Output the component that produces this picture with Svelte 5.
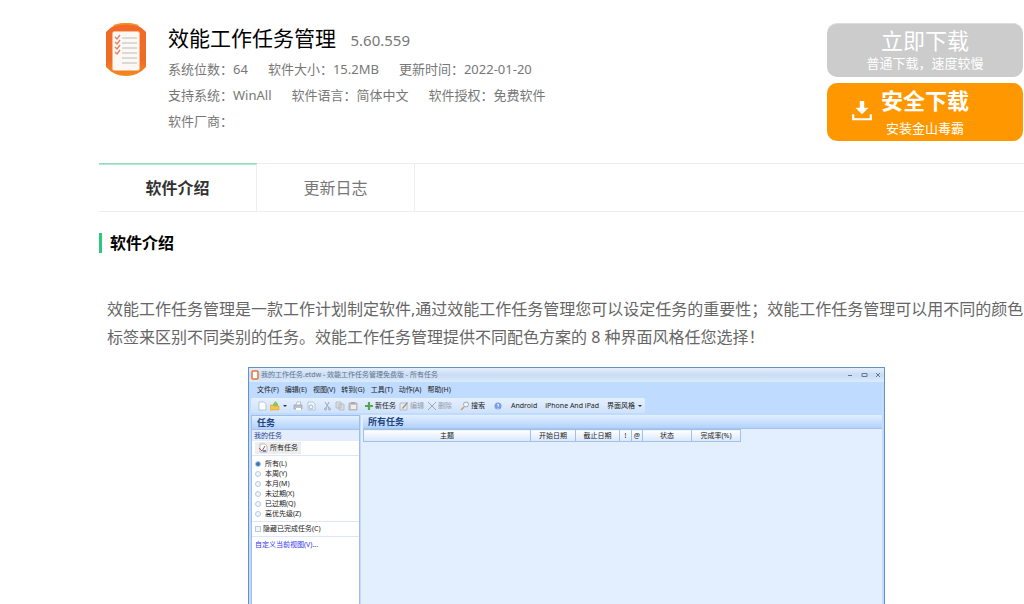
<script lang="ts">
    const info = [
        [["系统位数", "64"], ["软件大小", "15.2MB"], ["更新时间", "2022-01-20"]],
        [["支持系统", "WinAll"], ["软件语言", "简体中文"], ["软件授权", "免费软件"]],
        [["软件厂商", ""]]
    ]

    const tabs = ["软件介绍", "更新日志"]
    let activeTab = $state(0)

    const menus = ["文件(F)", "编辑(E)", "视图(V)", "转到(G)", "工具(T)", "动作(A)", "帮助(H)"]
    const filters = ["所有(L)", "本周(Y)", "本月(M)", "未过期(X)", "已过期(Q)", "高优先级(Z)"]
    let filter = $state("所有(L)")

    const columns = [
        { name: "主题", width: 167 },
        { name: "开始日期", width: 45 },
        { name: "截止日期", width: 44 },
        { name: "!", width: 12 },
        { name: "@", width: 11 },
        { name: "状态", width: 49 },
        { name: "完成率(%)", width: 49 }
    ]
</script>

<div class="page">
    <header>
        <svg class="logo" viewBox="0 0 42 54">
            <defs>
                <linearGradient id="logo-bg" x1="0" y1="0" x2="0" y2="1">
                    <stop offset="0" stop-color="#f2692a" />
                    <stop offset="0.7" stop-color="#ee6c25" />
                    <stop offset="1" stop-color="#f28a1f" />
                </linearGradient>
            </defs>
            <path d="M1 9Q9 0 21 0Q33 0 41 9V44Q33 53 21 53Q9 53 1 44Z" fill="url(#logo-bg)" />
            <path d="M9 2.500Q14 .8 21 .8Q28 .8 33 2.500" fill="none" stroke="#f7941e" stroke-width="1.5" />
            <rect x="7.5" y="8.500" width="27" height="39" rx="2" fill="#fdf8f4" stroke="#f9b98c" />
            <path d="M17 15H32M17 20H32M17 25H32M17 30H32M17 35H32M17 40H32" stroke="#cfcfd2" stroke-width="1.3" />
            <path d="M10 14l2 2 3-4M10 19l2 2 3-4M10 24l2 2 3-4M10 29l2 2 3-4" fill="none" stroke="#e58065" stroke-width="1.4" />
        </svg>
        <div class="summary">
            <h1>效能工作任务管理 <span>5.60.559</span></h1>
            {#each info as row}
                <div class="info-row">
                    {#each row as [label, value]}
                        <span>{label}：{value}</span>
                    {/each}
                </div>
            {/each}
        </div>
        <div class="downloads">
            <button class="download plain">
                <strong>立即下载</strong>
                <small>普通下载，速度较慢</small>
            </button>
            <button class="download safe">
                <svg viewBox="0 0 20 20">
                    <path d="M8 1h4v6h4l-6 6-6-6h4z" fill="#fff" />
                    <path d="M2 13v4.500h16V13" fill="none" stroke="#fff" stroke-width="2" />
                </svg>
                <strong>安全下载</strong>
                <small>安装金山毒霸</small>
            </button>
        </div>
    </header>

    <nav>
        {#each tabs as tab, i}
            <button class:active={activeTab == i} onclick={() => activeTab = i}>{tab}</button>
        {/each}
    </nav>

    <h2>软件介绍</h2>
    <p class="intro">效能工作任务管理是一款工作计划制定软件,通过效能工作任务管理您可以设定任务的重要性；效能工作任务管理可以用不同的颜色标签来区别不同类别的任务。效能工作任务管理提供不同配色方案的 8 种界面风格任您选择！</p>

    <figure>
        <div class="window">
            <div class="titlebar">
                <svg class="icon" viewBox="0 0 10 10">
                    <rect x="2" y="1" width="6" height="8" rx="1" fill="#fff" stroke="#e8743a" stroke-width="1.5" />
                </svg>
                <span>我的工作任务.etdw - 效能工作任务管理免费版 - 所有任务</span>
                <svg class="controls" viewBox="0 0 36 8">
                    <path d="M3 4.500h4M17 2.500h5v3h-5zM31 2l4 4M35 2l-4 4" fill="none" stroke="#64788f" />
                </svg>
            </div>
            <div class="menubar">
                {#each menus as menu}
                    <button>{menu}</button>
                {/each}
            </div>
            <div class="toolbar">
                <button aria-label="新建"><svg class="icon" viewBox="0 0 10 10"><path d="M2 1h5l2 2v6H2z" fill="#fff" stroke="#9fb4cf" stroke-width=".7" /></svg></button>
                <button aria-label="打开"><svg class="icon" viewBox="0 0 10 10"><path d="M0 9V4h3l1 1h5v4z" fill="#f5c64b" stroke="#d49b2a" stroke-width=".5" /><path d="M3 5V3L5.500 0 8 3v2z" fill="#8fc45c" /></svg></button>
                <span class="arrow"></span>
                <button class="split" aria-label="打印"><svg class="icon" viewBox="0 0 10 10"><path d="M3 4l1-3h4L7 4" fill="#fff" stroke="#a4aebb" stroke-width=".7" /><path d="M1 4h8v4H1z" fill="#bcc3cd" stroke="#8e99a7" stroke-width=".6" /><path d="M3 7h5v2H3z" fill="#fff" /></svg></button>
                <button aria-label="预览"><svg class="icon" viewBox="0 0 10 10"><path d="M2 1h5l2 2v6H2z" fill="#f2f6fb" stroke="#a6b6ca" stroke-width=".7" /><circle cx="5" cy="6" r="2" fill="none" stroke="#8a9cb4" stroke-width=".7" /></svg></button>
                <button class="split" aria-label="剪切"><svg class="icon" viewBox="0 0 10 10"><path d="M3 1l4 6M7 1L4 7" stroke="#9ea6b3" /><circle cx="3.500" cy="8" r="1" fill="none" stroke="#9ea6b3" /><circle cx="7.500" cy="8" r="1" fill="none" stroke="#9ea6b3" /></svg></button>
                <button aria-label="复制"><svg class="icon" viewBox="0 0 10 10"><path d="M1 1h5v6H1zM4 3h5v6H4z" fill="#dcdcdf" stroke="#aeb2bb" stroke-width=".7" /></svg></button>
                <button aria-label="粘贴"><svg class="icon" viewBox="0 0 10 10"><path d="M1 2h8v7H1z" fill="#c9c6c2" stroke="#aaa6a2" stroke-width=".7" /><path d="M3 4h5v4H3z" fill="#eee" /><path d="M3 1h4v2H3z" fill="#aaa" /></svg></button>
                <button class="split"><svg class="icon" viewBox="0 0 10 10"><path d="M5 1v8M1 5h8" stroke="#55a74d" stroke-width="2.200" /></svg>新任务</button>
                <button disabled><svg class="icon" viewBox="0 0 10 10"><path d="M1 2h7v7H1z" fill="#e8e8e8" stroke="#aaa" stroke-width=".7" /><path d="M3 7l5-6 1 1-5 6z" fill="#999" /></svg>编辑</button>
                <button disabled><svg class="icon" viewBox="0 0 10 10"><path d="M1 1l8 8M9 1L1 9" stroke="#9fa7b2" /></svg>删除</button>
                <button class="wide"><svg class="icon" viewBox="0 0 10 10"><circle cx="6" cy="3.500" r="2.500" fill="#eef5ff" stroke="#98a7bd" /><path d="M4 6L1 9" stroke="#d59a54" stroke-width="1.500" /></svg>搜索</button>
                <button class="wide" aria-label="帮助"><svg class="icon" viewBox="0 0 10 10"><circle cx="5" cy="5" r="3.500" fill="#7b9ee8" /><path d="M4 4q1-2 2 0L5 5v1M5 7v1" fill="none" stroke="#fff" stroke-width=".8" /></svg></button>
                <button class="wide">Android</button>
                <button class="wide">iPhone And iPad</button>
                <button class="wide">界面风格</button>
                <span class="arrow"></span>
            </div>
            <div class="panes">
                <aside>
                    <h3>任务</h3>
                    <h4>我的任务</h4>
                    <div class="group">
                        <button class="view"><svg class="icon" viewBox="0 0 10 10"><path d="M2 1h5l2 2v6H2z" fill="#fff" stroke="#99a3b0" stroke-width=".7" /><path d="M1 5l3 3 3-5" fill="none" stroke="#c84f42" /><path d="M5 7h3v2H5z" fill="#6388bd" /></svg>所有任务</button>
                    </div>
                    <div class="group filters">
                        {#each filters as name}
                            <label><input type="radio" name="filter" value={name} bind:group={filter}>{name}</label>
                        {/each}
                    </div>
                    <div class="group done">
                        <label><input type="checkbox">隐藏已完成任务(C)</label>
                    </div>
                    <a href="#view">自定义当前视图(V)...</a>
                </aside>
                <section>
                    <h3>所有任务</h3>
                    <table>
                        <thead>
                            <tr>
                                {#each columns as column}
                                    <th style="width: {column.width}px">{column.name}</th>
                                {/each}
                            </tr>
                        </thead>
                    </table>
                </section>
            </div>
        </div>
    </figure>
</div>

<style>
    :global(body) {
        margin: 0;
        background: #fff;
    }
    .page {
        box-sizing: border-box;
        height: 100vh;
        overflow: hidden;
        padding-left: 99px;
        font-family: "Noto Sans", "Noto Sans CJK SC", sans-serif;
        color: #666;
    }
    button {
        font: inherit;
        color: inherit;
        border: none;
        background: none;
        padding: 0;
        cursor: pointer;
    }
    h1, h2, h3, h4, p, figure {
        margin: 0;
    }

    header {
        display: flex;
        align-items: flex-start;
        height: 140px;
        padding: 23px 1px 0 6px;
    }
    .logo {
        width: 42px;
        height: 54px;
        flex: none;
    }
    .summary {
        flex: 1;
        margin-left: 21px;
    }
    h1 {
        font-size: 21px;
        line-height: 31px;
        font-weight: 400;
        color: #000;
    }
    h1 span {
        margin-left: 9px;
        font-size: 15px;
        color: #777;
    }
    .info-row {
        display: flex;
        gap: 20px;
        font-size: 13px;
        line-height: 26px;
        color: #777;
    }
    .downloads {
        display: flex;
        flex-direction: column;
        gap: 6px;
        width: 196px;
    }
    .download {
        position: relative;
        display: flex;
        flex-direction: column;
        align-items: center;
        border-radius: 10px;
        color: #fff;
    }
    .download strong {
        font-size: 22px;
        line-height: 28px;
        font-weight: 400;
    }
    .download small {
        font-size: 13px;
        line-height: 18px;
    }
    .plain {
        padding: 2px 0 5px;
        background: #ccc;
        border-top: 1px solid #ddd;
    }
    .safe {
        gap: 5px;
        padding: 3px 0 4px;
        background: #ff9800;
    }
    .safe strong {
        font-weight: 700;
    }
    .safe svg {
        position: absolute;
        left: 24px;
        top: 17px;
        width: 22px;
        height: 22px;
    }

    nav {
        display: flex;
        border-top: 1px solid #eee;
        border-bottom: 1px solid #eee;
    }
    nav button {
        width: 158px;
        height: 47px;
        box-sizing: border-box;
        padding-bottom: 2px;
        border-right: 1px solid #eee;
        font-size: 16px;
        color: #777;
    }
    nav .active {
        font-weight: 700;
        color: #333;
        box-shadow: 0 -1px #8ddbb5, inset 0 1px #b4ecd0;
    }
    h2 {
        margin-top: 21px;
        padding-left: 8px;
        border-left: 3px solid #2bc97e;
        font-size: 16px;
        line-height: 20px;
        color: #000;
    }
    .intro {
        margin: 42px -8px 0 0;
        padding-left: 8px;
        font-size: 16px;
        line-height: 28px;
    }

    figure {
        margin-top: 16px;
        padding-left: 10px;
    }
    .window {
        box-sizing: border-box;
        max-width: 637px;
        min-height: 400px;
        margin: 0 auto;
        padding: 0 2px;
        border: 1px solid #6a8fc4;
        background: #bfdbff;
        font-size: 7px;
        line-height: 10px;
        color: #222;
    }
    .window button {
        white-space: nowrap;
    }
    .icon {
        width: 10px;
        height: 10px;
        flex: none;
    }
    .titlebar {
        display: flex;
        align-items: center;
        gap: 1px;
        height: 14px;
        margin: 0 -2px;
        padding-left: 1px;
        background: linear-gradient(#e4effc, #c9dcf4 50%, #dcebfc);
        color: #62748a;
    }
    .controls {
        width: 36px;
        height: 8px;
        margin: 0 3px 0 auto;
    }
    .menubar {
        display: flex;
        align-items: center;
        gap: 6px;
        height: 16px;
        padding-left: 6px;
    }
    .toolbar {
        display: flex;
        align-items: center;
        gap: 3px;
        width: fit-content;
        height: 15px;
        padding: 0 3px 0 6px;
        border-radius: 2px;
        background: linear-gradient(#e5f0ff, #cfe2fa);
    }
    .toolbar button {
        display: flex;
        align-items: center;
        gap: 1px;
    }
    .toolbar button:disabled {
        color: #959ca8;
    }
    .toolbar .split {
        margin-left: 3px;
    }
    .toolbar .wide {
        margin-left: 5px;
    }
    .arrow {
        border: 2px solid transparent;
        border-top-color: #333;
        border-bottom: none;
    }
    .panes {
        display: flex;
        gap: 1px;
        min-height: 350px;
        margin-top: 2px;
    }
    aside {
        width: 109px;
        background: #fff;
        border: 1px solid #9dbfea;
        box-sizing: border-box;
    }
    section {
        flex: 1;
        padding-left: 2px;
        background: #e3efff;
    }
    h3 {
        height: 14px;
        box-sizing: border-box;
        padding-left: 5px;
        border-bottom: 1px solid #a5c4ec;
        background: linear-gradient(#e3efff, #b2d2fb);
        font-size: 9px;
        line-height: 13px;
        color: #1e4583;
    }
    h4 {
        padding-left: 2px;
        background: #e3edfb;
        font-size: 7px;
        line-height: 11px;
        font-weight: 400;
        color: #243d8c;
    }
    .group {
        border-bottom: 1px solid #dce8f7;
        padding: 1px 3px;
    }
    .view {
        display: flex;
        align-items: center;
        gap: 2px;
        padding: 1px 3px;
        background: #eee;
    }
    .filters {
        padding: 3px 3px 2px;
    }
    .done {
        padding: 2px 3px;
    }
    label {
        display: flex;
        align-items: center;
        gap: 4px;
    }
    .done label {
        gap: 2px;
    }
    input {
        appearance: none;
        box-sizing: border-box;
        width: 6px;
        height: 6px;
        margin: 0;
        border: 1px solid #b6cbe5;
        background: #f1f5fa;
    }
    input[type="radio"] {
        border-radius: 50%;
    }
    input[type="radio"]:checked {
        background: #3974b5;
    }
    a {
        display: block;
        padding: 3px 3px;
        color: #3636ee;
        text-decoration: none;
    }
    table {
        table-layout: fixed;
        width: 377px;
        border-collapse: collapse;
    }
    th {
        height: 12px;
        box-sizing: border-box;
        padding: 0;
        border: 1px solid #a3c0e8;
        background: linear-gradient(#fff, #d7e7fb);
        font-weight: 400;
        line-height: 10px;
    }
</style>
